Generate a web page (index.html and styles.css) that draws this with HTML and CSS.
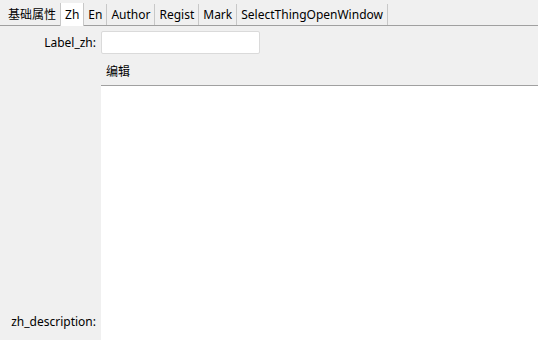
FILE: index.html
```html
<!DOCTYPE html>
<html lang="zh">
<head>
  <meta charset="UTF-8" />
  <title>Zh</title>
  <link rel="stylesheet" href="styles.css">
</head>
<body>
  <div class="tabs">
    <div class="tab">基础属性</div>
    <div class="tab active">Zh</div>
    <div class="tab">En</div>
    <div class="tab">Author</div>
    <div class="tab">Regist</div>
    <div class="tab">Mark</div>
    <div class="tab">SelectThingOpenWindow</div>
  </div>

  <div class="form">
    <label class="label" for="label-zh">Label_zh:</label>
    <input type="text" id="label-zh" class="field" />

    <label class="label bottom">zh_description:</label>
    <div class="editor">
      <div class="toolbar">编辑</div>
      <div class="area"></div>
    </div>
  </div>
</body>
</html>
```

FILE: styles.css
```css
* {
  box-sizing: border-box;
}

html, body {
  height: 100%;
}

body {
  margin: 0;
  background: #f0f0f0;
  color: #000;
  font-family: "Noto Sans", "Noto Sans CJK SC", sans-serif;
  font-size: 12px;
  display: flex;
  flex-direction: column;
  overflow: hidden;
}

.tabs {
  display: flex;
  height: 26px;
  padding: 4px 0 0 4px;
  border-bottom: 1px solid #a0a0a0;
}

.tab {
  padding: 0 4px 0 4px;
  line-height: 21px;
  border-right: 1px solid #c8c8c8;
  white-space: nowrap;
}

.tab.active {
  background: #fff;
  margin-top: -1px;
  margin-bottom: -1px;
  line-height: 23px;
  border-left: 1px solid #c8c8c8;
  margin-left: -1px;
}

.form {
  flex: 1;
  display: grid;
  grid-template-columns: 101px 1fr;
  grid-template-rows: auto 1fr;
  padding-top: 5px;
}

.label {
  text-align: right;
  padding-right: 5px;
  align-self: center;
}

.label.bottom {
  align-self: end;
  padding-bottom: 10px;
}

.field {
  width: 159px;
  height: 23px;
  border: 1px solid #dadada;
  border-radius: 2px;
  background: #fff;
  font: inherit;
}

.editor {
  display: flex;
  flex-direction: column;
  margin-top: 5px;
}

.toolbar {
  height: 27px;
  line-height: 26px;
  padding-left: 5px;
  border-bottom: 1px solid #a0a0a0;
}

.area {
  flex: 1;
  background: #fff;
}
```
